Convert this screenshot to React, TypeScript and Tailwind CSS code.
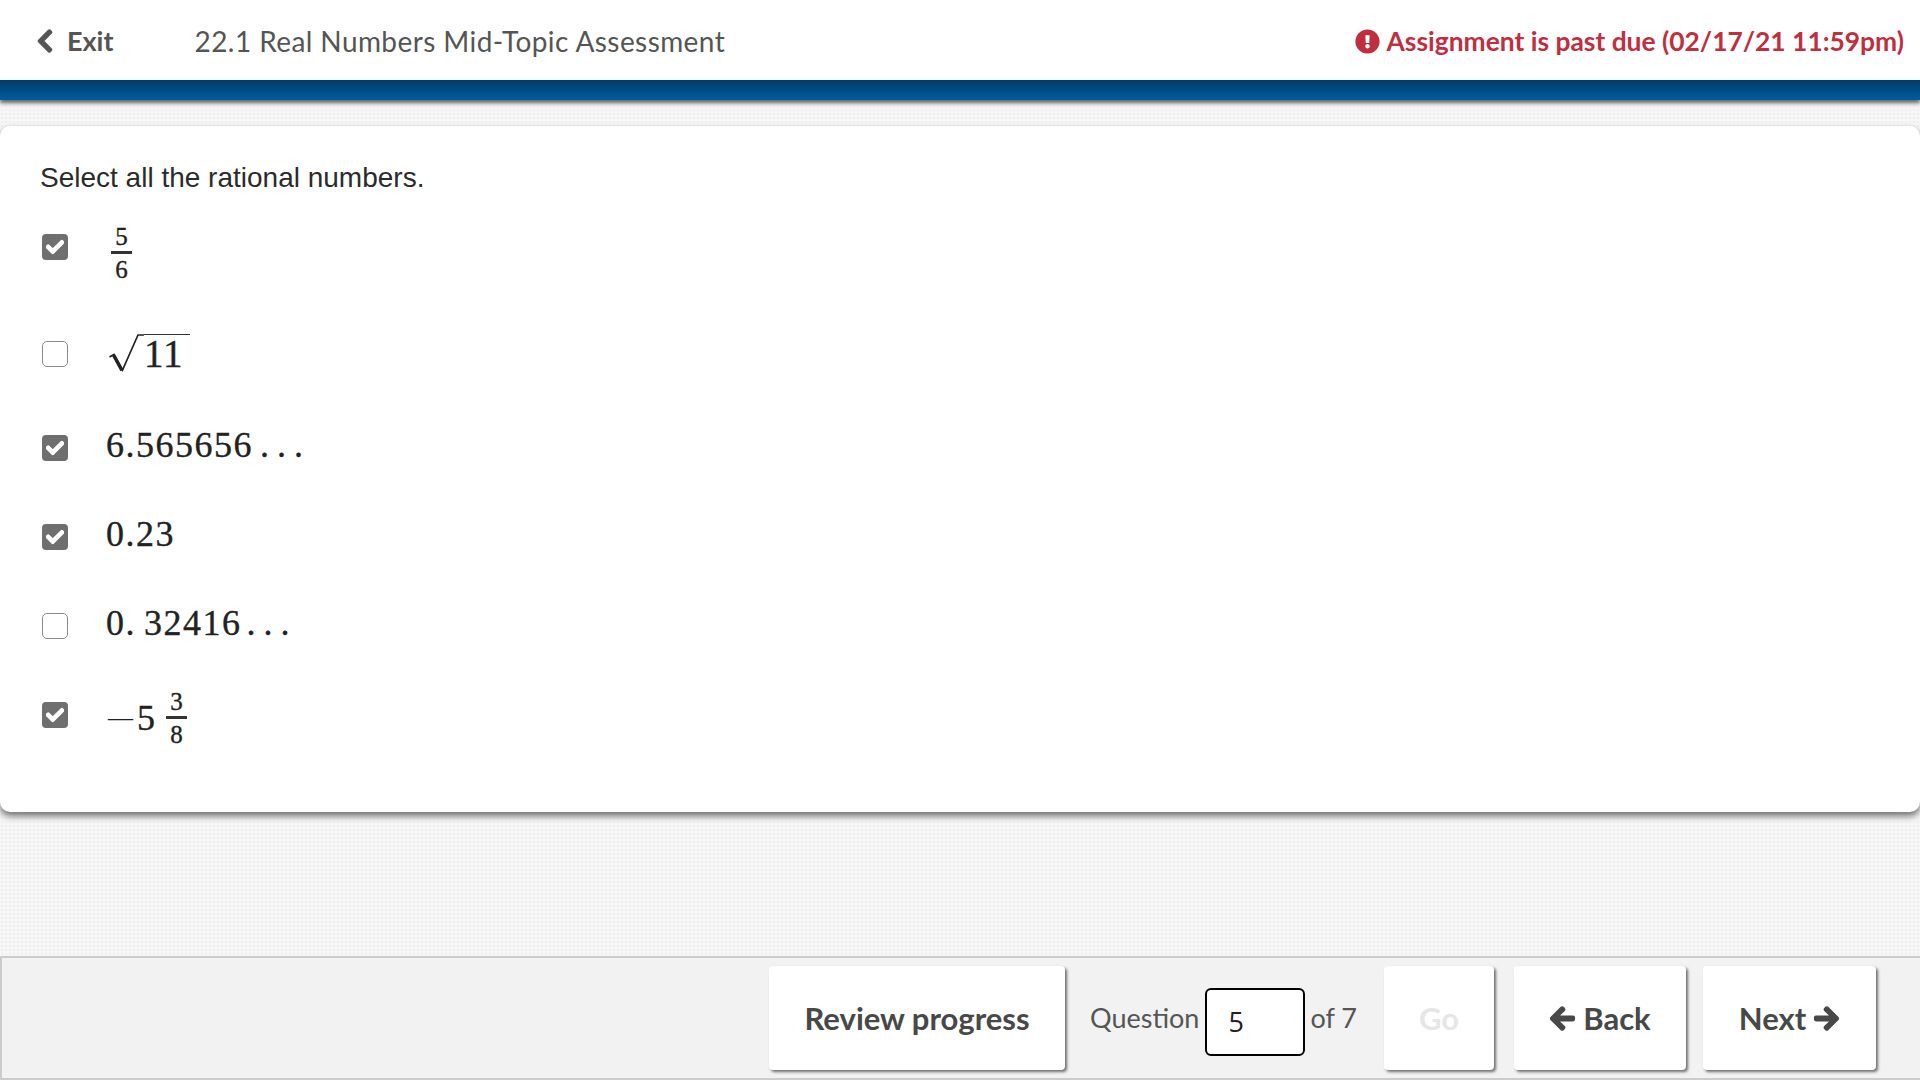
import { FaArrowLeft, FaArrowRight, FaCheck, FaChevronLeft, FaExclamationCircle } from 'react-icons/fa'

const mathFont = "font-['Liberation_Serif',serif] text-[#222] [-webkit-text-stroke:0.35px_#222]"

function Box({ checked }: { checked: boolean }) {
  if (!checked) {
    return <span className="h-[26px] w-[26px] shrink-0 rounded-[5px] border border-[#8a8a8a] bg-white" />
  }
  return (
    <span className="flex h-[26px] w-[26px] shrink-0 items-center justify-center rounded-[4px] bg-[#6f6f6f] text-white">
      <FaCheck className="h-[18px] w-[18px]" stroke="currentColor" strokeWidth={30} />
    </span>
  )
}

function Frac({ top, bottom }: { top: string; bottom: string }) {
  return (
    <span className={`inline-flex w-[21px] flex-col items-center text-[25px] leading-[29px] ${mathFont}`}>
      <span className="w-full border-b-[3px] border-[#333] text-center">{top}</span>
      <span className="pt-[1px] text-center">{bottom}</span>
    </span>
  )
}

function Root() {
  return (
    <span className="flex items-start">
      <svg width="35" height="40" viewBox="0 0 35 40" fill="none" className="ml-[3px]">
        <path d="M0.5 23 L5 20.5 L13.5 36 L29 1 L35 1" stroke="#222" strokeWidth="1.7" />
        <path d="M4.5 21 L13 36.5" stroke="#222" strokeWidth="3.5" />
      </svg>
      <span className={`w-[46px] border-t-[1.5px] border-[#333] text-[39px] leading-[38px] tracking-[1px] ${mathFont}`}>11</span>
    </span>
  )
}

function MathText({ children }: { children: string }) {
  return <span className={`whitespace-pre text-[36px] leading-[44px] tracking-[1.5px] ${mathFont}`}>{children}</span>
}

const Dots = ({ className = 'ml-[7px]' }: { className?: string }) => (
  <span className={`${className} text-[36px] tracking-[8px] ${mathFont}`}>...</span>
)

function Btn({ children, className = '' }: { children: React.ReactNode; className?: string }) {
  return (
    <button className={`flex h-[104px] items-center justify-center gap-[7px] rounded-[4px] bg-white text-[31px] font-bold text-[#484848] shadow-[2px_2px_3px_rgba(0,0,0,0.55)] ${className}`}>
      {children}
    </button>
  )
}

export default function App() {
  return (
    <div className="flex h-screen flex-col overflow-hidden bg-[#f6f6f6] bg-[radial-gradient(#f0f0f0_1px,transparent_1px)] bg-[size:4px_4px] font-['Lato',sans-serif]">
      {/* header */}
      <header className="flex h-[80px] shrink-0 items-center justify-between bg-white pl-[35px] pr-[16px] pt-[2px]">
        <div className="flex items-center text-[#555]">
          <FaChevronLeft className="h-[26px] w-[20px]" stroke="currentColor" strokeWidth={25} />
          <span className="ml-[12px] text-[27px] font-bold">Exit</span>
          <span className="ml-[81px] text-[28px] tracking-[0.42px]">22.1 Real Numbers Mid-Topic Assessment</span>
        </div>
        <div className="mt-[1px] flex items-center gap-[7px] text-[26.4px] font-bold text-[#bf2f3f]">
          <FaExclamationCircle className="h-[25px] w-[25px]" />
          <span>Assignment is past due (02/17/21 11:59pm)</span>
        </div>
      </header>
      <div className="h-[20px] shrink-0 bg-gradient-to-b from-[#003c69] to-[#005c9f] shadow-[0_3px_4px_rgba(0,0,0,0.6)]" />

      {/* question card */}
      <main className="mt-[26px] h-[686px] shrink-0 rounded-[10px] bg-white pl-[42px] pt-[34px] shadow-[0_4px_7px_rgba(0,0,0,0.55)]">
        <p className="ml-[-2px] font-['Liberation_Sans',sans-serif] text-[28px] leading-[36px] text-[#2b2b2b]">
          Select all the rational numbers.
        </p>
        <div className="mt-[18px] flex h-[66px] items-center gap-[43px]">
          <Box checked />
          <span className="mt-[12px]"><Frac top="5" bottom="6" /></span>
        </div>
        <div className="mt-[44px] flex h-[60px] items-center gap-[38px]">
          <Box checked={false} />
          <Root />
        </div>
        <div className="mt-[42px] flex h-[44px] items-center gap-[38px]">
          <Box checked />
          <span className="mt-[-7px]"><MathText>6.565656</MathText><Dots /></span>
        </div>
        <div className="mt-[45px] flex h-[44px] items-center gap-[38px]">
          <Box checked />
          <span className="mt-[-7px]"><MathText>0.23</MathText></span>
        </div>
        <div className="mt-[45px] flex h-[44px] items-center gap-[38px]">
          <Box checked={false} />
          <span className="mt-[-7px]">
            <MathText>0.</MathText>
            <span className="ml-[8px]"><MathText>32416</MathText></span>
            <Dots className="ml-[5px]" />
          </span>
        </div>
        <div className="mt-[34px] flex h-[66px] items-center gap-[40px]">
          <Box checked />
          <span className="mt-[12px] flex items-center">
            <span className="mt-[-6px] font-['Liberation_Serif',serif] text-[25px] leading-[44px] text-[#222]">{'\u2014'}</span>
            <span className={`ml-[4px] mt-[-7px] text-[36px] leading-[44px] ${mathFont}`}>5</span>
            <span className="ml-[11px] mt-[-6px]"><Frac top="3" bottom="8" /></span>
          </span>
        </div>
      </main>

      {/* footer nav */}
      <footer className="mt-auto flex h-[124px] shrink-0 items-center justify-end border-2 border-r-0 border-[#cccccc] bg-[#f2f2f2] pr-[44px] text-[#555]">
        <Btn className="w-[296px]">Review progress</Btn>
        <span className="ml-[25px] text-[27px]">Question</span>
        <span className="ml-[6px] mt-[8px] flex h-[68px] w-[100px] shrink-0 items-center rounded-[6px] border-2 border-black bg-white pl-[21px] font-['Open_Sans',sans-serif] text-[27px] text-[#222]">5</span>
        <span className="ml-[5px] text-[27px]">of 7</span>
        <Btn className="ml-[27px] w-[110px] bg-[#f6f6f6] !text-[#e6e6e6] shadow-[2px_2px_3px_rgba(0,0,0,0.15)]">Go</Btn>
        <Btn className="ml-[20px] w-[172px]">
          <FaArrowLeft className="h-[27px] w-[27px]" stroke="currentColor" strokeWidth={30} />
          Back
        </Btn>
        <Btn className="ml-[17px] w-[173px]">
          Next
          <FaArrowRight className="h-[27px] w-[27px]" stroke="currentColor" strokeWidth={30} />
        </Btn>
      </footer>
    </div>
  )
}
